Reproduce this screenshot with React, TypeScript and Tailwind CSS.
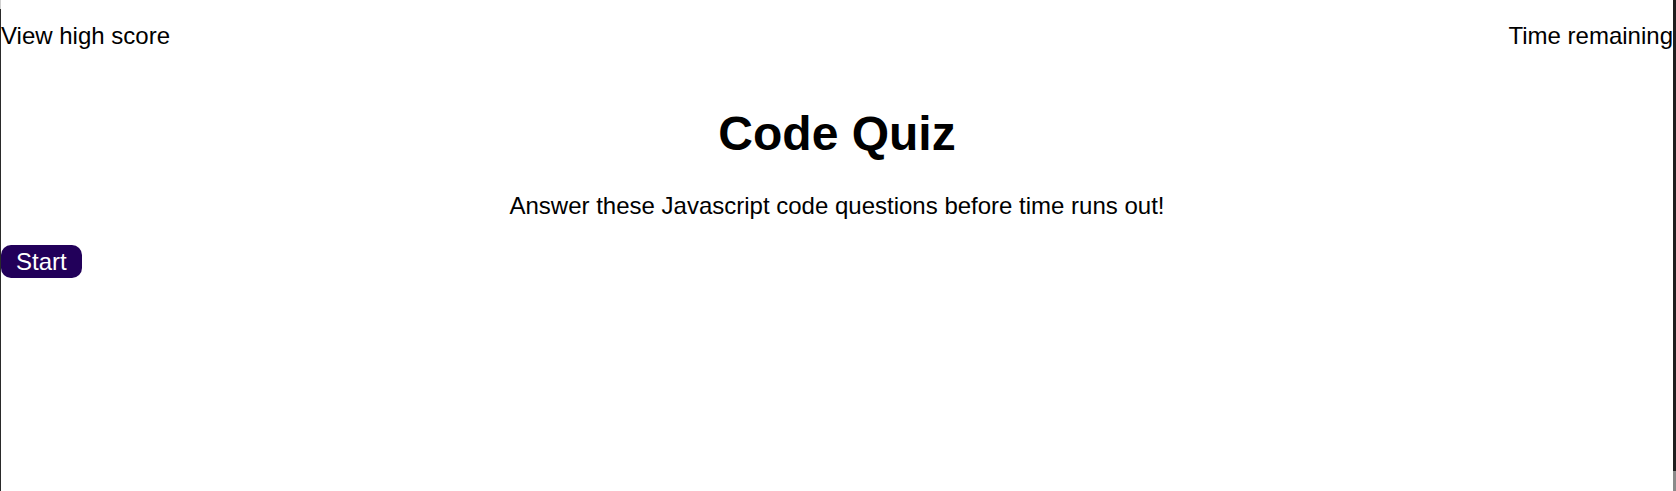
import React from 'react';

export default function App() {
  return (
    <div className="flex h-[491px] w-[1676px] bg-white font-['Liberation_Sans',Arial,sans-serif] text-black">
      {/* left window edge */}
      <div className="flex w-px flex-col">
        <div className="h-[9px] bg-[#d0d0d0]" />
        <div className="flex-1 bg-[#2a2a2a]" />
      </div>

      <main className="flex flex-1 flex-col overflow-hidden">
        <header className="flex justify-between pt-[18px] text-[24px] leading-[36px]">
          <span>View high score</span>
          <span className="whitespace-nowrap">Time remaining</span>
        </header>

        <h1 className="mt-[44px] text-center text-[48px] font-bold leading-[72px]">Code Quiz</h1>

        <p className="mt-[18px] text-center text-[24px] leading-[36px]">
          Answer these Javascript code questions before time runs out!
        </p>

        <div className="mt-[21px]">
          <button className="h-[33px] rounded-[10px] bg-[#22005a] px-[15px] text-[24px] leading-[33px] text-white">
            Start
          </button>
        </div>
      </main>

      {/* right window edge */}
      <div className="flex w-[3px] flex-col">
        <div className="flex-1 bg-[#1f1f1f]" />
        <div className="h-[20px] bg-[#8a8a8a]" />
      </div>
    </div>
  );
}
